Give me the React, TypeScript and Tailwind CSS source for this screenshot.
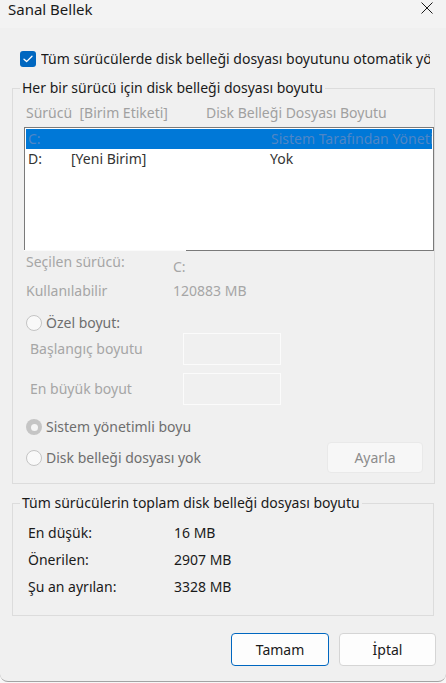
import React from "react";

const font = { fontFamily: '"Segoe UI", "Noto Sans", sans-serif' };

function Check() {
  return (
    <span className="flex h-[16px] w-[16px] items-center justify-center rounded-[3px] bg-[#0067c0]">
      <svg width="10" height="8" viewBox="0 0 10 8" fill="none">
        <path d="M1 4.2 3.6 6.6 9 1.2" stroke="#fff" strokeWidth="1.3" strokeLinecap="round" strokeLinejoin="round" />
      </svg>
    </span>
  );
}

function Radio({ checked }: { checked?: boolean }) {
  if (checked) {
    return (
      <span className="flex h-[16px] w-[16px] shrink-0 items-center justify-center rounded-full bg-[#c5c5c5]">
        <span className="h-[7px] w-[7px] rounded-full bg-[#f5f5f5]" />
      </span>
    );
  }
  return <span className="h-[16px] w-[16px] shrink-0 rounded-full border border-[#c4c4c4] bg-[#f9f9f9]" />;
}

export default function App() {
  return (
    <div className="h-[683px] w-[446px] overflow-hidden bg-[#f7f7f7] text-[14px] leading-[20px]" style={font}>
      <div className="h-[682px] rounded-b-[8px] border-b border-[#a3a3a3] bg-[#f0f0f0]">
        {/* title bar */}
        <div className="flex h-[28px] justify-between bg-[#f3f3f3]">
          <span className="ml-[8px] mt-[-1px] text-[15px] text-[#1a1a1a]">Sanal Bellek</span>
          <svg className="mr-[13px] mt-[2px]" width="12" height="12" viewBox="0 0 12 12">
            <path d="M0.5 0.5 11.5 11.5M11.5 0.5 0.5 11.5" stroke="#1a1a1a" strokeWidth="1" />
          </svg>
        </div>

        <div className="px-[12px]">
          <div className="mt-[21px] flex h-[20px] items-center whitespace-nowrap">
            <span className="ml-[8px]">
              <Check />
            </span>
            <span className="ml-[5px] w-[389px] overflow-hidden text-[#1a1a1a]">
              Tüm sürücülerde disk belleği dosyası boyutunu otomatik yönet
            </span>
          </div>

          {/* per-drive paging file */}
          <fieldset className="mt-[9px] border border-[#dcdcdc] pb-[10px]">
            <legend className="ml-[7px] px-[2px] text-[#1a1a1a]">Her bir sürücü için disk belleği dosyası boyutu</legend>
            <div className="mt-[5px] flex h-[20px] items-center whitespace-nowrap pl-[13px] text-[#a0a0a0]">
              <span className="w-[180px] shrink-0">Sürücü&nbsp; [Birim Etiketi]</span>
              <span>Disk Belleği Dosyası Boyutu</span>
            </div>

            <div className="ml-[11px] mt-[4px] w-[410px]">
              <div className="h-[123px] border-x border-t border-[#7a7a7a] bg-white p-[1px]">
                <div className="flex h-[20px] items-center overflow-hidden whitespace-nowrap bg-[#0078d7] pl-[2px] text-[#4f86c6]">
                  <span className="w-[243px] shrink-0">C:</span>
                  <span className="shrink-0">Sistem Tarafından Yönetilen</span>
                </div>
                <div className="flex h-[20px] items-center whitespace-nowrap pl-[2px] text-[#333333]">
                  <span className="w-[43px] shrink-0">D:</span>
                  <span className="w-[199px] shrink-0">[Yeni Birim]</span>
                  <span>Yok</span>
                </div>
              </div>
              <div className="flex h-[1px]">
                <div className="w-[162px] bg-[#fafafa]" />
                <div className="flex-1 bg-[#7a7a7a]" />
              </div>
            </div>

            <div className="mt-[1px] flex h-[20px] items-start whitespace-nowrap pl-[13px] text-[#a6a6a6]">
              <span className="w-[147px] shrink-0">Seçilen sürücü:</span>
              <span className="mt-[5px]">C:</span>
            </div>
            <div className="mt-[9px] flex h-[20px] items-center whitespace-nowrap pl-[13px] text-[#a6a6a6]">
              <span className="w-[147px] shrink-0">Kullanılabilir</span>
              <span>120883 MB</span>
            </div>

            <div className="mt-[12px] flex h-[20px] items-center gap-[4px] pl-[13px] text-[#6e6e6e]">
              <Radio />
              <span>Özel boyut:</span>
            </div>
            <div className="flex h-[32px] items-center pl-[17px] text-[#a6a6a6]">
              <span className="w-[153px] shrink-0">Başlangıç boyutu</span>
              <span className="h-[32px] w-[98px] border border-[#fbfbfb] bg-[#f0f0f0]" />
            </div>
            <div className="mt-[8px] flex h-[32px] items-center pl-[17px] text-[#a6a6a6]">
              <span className="w-[153px] shrink-0">En büyük boyut</span>
              <span className="h-[32px] w-[98px] border border-[#fbfbfb] bg-[#f0f0f0]" />
            </div>

            <div className="mt-[12px] flex h-[20px] items-center gap-[4px] pl-[13px] text-[#6e6e6e]">
              <Radio checked />
              <span>Sistem yönetimli boyu</span>
            </div>
            <div className="mt-[5px] flex h-[31px] items-center justify-between pl-[13px] pr-[11px]">
              <div className="flex items-center gap-[4px] text-[#6e6e6e]">
                <Radio />
                <span>Disk belleği dosyası yok</span>
              </div>
              <span className="flex h-[31px] w-[96px] items-center justify-center rounded-[4px] border border-[#e9e9e9] bg-[#f7f7f7] text-[#8c8c8c]">
                Ayarla
              </span>
            </div>
          </fieldset>

          {/* totals */}
          <fieldset className="mt-[9px] border border-[#dcdcdc] pb-[18px] text-[#1a1a1a]">
            <legend className="ml-[7px] px-[2px]">Tüm sürücülerin toplam disk belleği dosyası boyutu</legend>
            {[
              ["En düşük:", "16 MB"],
              ["Önerilen:", "2907 MB"],
              ["Şu an ayrılan:", "3328 MB"],
            ].map(([k, v], i) => (
              <div key={k} className={`flex h-[20px] items-center pl-[15px] ${i === 0 ? "mt-[10px]" : "mt-[7px]"}`}>
                <span className="w-[146px] shrink-0">{k}</span>
                <span>{v}</span>
              </div>
            ))}
          </fieldset>
        </div>

        {/* dialog buttons */}
        <div className="mt-[17px] flex justify-end gap-[10px] pr-[10px] text-[#1a1a1a]">
          <button className="h-[33px] w-[98px] rounded-[4px] border border-[#0067c0] bg-[#fdfdfd]">Tamam</button>
          <button className="h-[33px] w-[97px] rounded-[4px] border border-[#d5d5d5] bg-[#fdfdfd]">İptal</button>
        </div>
      </div>
    </div>
  );
}
